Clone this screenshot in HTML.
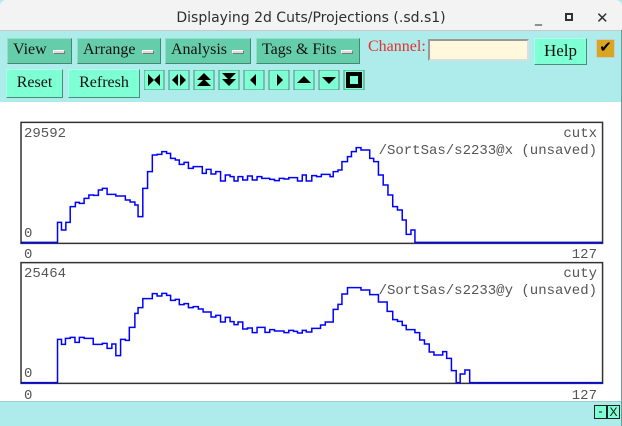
<!DOCTYPE html>
<html><head><meta charset="utf-8"><style>
*{margin:0;padding:0;box-sizing:border-box}
body{width:622px;height:426px;overflow:hidden;background:#aeeceb;position:relative;font-family:"Liberation Serif",serif}
.a{position:absolute}
.title{left:0;top:0;width:622px;height:31px;background:#f3f3f3;border-bottom:1px solid #c8c8c8;border-radius:6px 6px 0 0;font-family:"DejaVu Sans","Liberation Sans",sans-serif;font-size:14px;color:#2e2e2e;text-align:center;line-height:36px}
.menu{top:38px;height:26px;background:#66cdaa;border:1px solid #4c9c80;border-color:#8fe0c4 #3f8a70 #3f8a70 #8fe0c4;font-size:16px;color:#111;padding-left:5px;line-height:22px}
.menu i{position:absolute;right:6px;top:11px;width:12px;height:4px;background:#ddd;border:1px solid #888;border-color:#fff #777 #777 #fff}
.btn{background:#7fffd4;border:1px solid #5aaa8e;border-color:#aaffe8 #46907a #46907a #aaffe8;font-size:16px;color:#111;text-align:center}
.mono{font-family:"Liberation Mono",monospace;font-size:14px;color:#555}
</style></head><body>
<div class="a title">Displaying 2d Cuts/Projections (.sd.s1)
<span class="a" style="left:535px;top:0;font-size:14px">_</span>
<span class="a" style="left:565px;top:13px;width:8px;height:8px;border:2px solid #333"></span>
<span class="a" style="left:596px;top:0;font-size:15px">✕</span>
</div>
<div class="a menu" style="left:7px;width:65px">View<i></i></div>
<div class="a menu" style="left:77px;width:84px">Arrange<i></i></div>
<div class="a menu" style="left:165px;width:86px">Analysis<i></i></div>
<div class="a menu" style="left:256px;width:104px">Tags &amp; Fits<i></i></div>
<div class="a" style="left:368px;top:38px;font-size:16px;color:#e53030">Channel:</div>
<div class="a" style="left:428px;top:39px;width:101px;height:22px;background:#fff8dc;border:2px solid #bbb;border-color:#999 #ddd #ddd #999"></div>
<div class="a btn" style="left:534px;top:38px;width:53px;height:27px;line-height:24px;font-size:17px">Help</div>
<div class="a" style="left:596px;top:39px;width:19px;height:19px;background:#daa520;border:1px solid #ccc;font-size:15px;line-height:17px;text-align:center">✔</div>
<div class="a btn" style="left:6px;top:69px;width:57px;height:29px;line-height:25px">Reset</div>
<div class="a btn" style="left:68px;top:69px;width:72px;height:29px;line-height:25px">Refresh</div>
<svg class="a" style="left:144px;top:70px" width="230" height="20">
<g fill="#000">
<rect x="0" width="20" height="20" fill="#7fffd4" stroke="#46907a"/><path d="M4 4 L10 10 L4 16Z M16 4 L10 10 L16 16Z"/>
<g transform="translate(25,0)"><rect width="20" height="20" fill="#7fffd4" stroke="#46907a"/><path d="M9 4 L3 10 L9 16Z M11 4 L17 10 L11 16Z"/></g>
<g transform="translate(50,0)"><rect width="20" height="20" fill="#7fffd4" stroke="#46907a"/><path d="M10 3 L17 10 L3 10Z M10 9 L17 16 L3 16Z"/></g>
<g transform="translate(75,0)"><rect width="20" height="20" fill="#7fffd4" stroke="#46907a"/><path d="M3 3 H17 L10 10Z M3 9 H17 L10 16Z"/></g>
<g transform="translate(100,0)"><rect width="20" height="20" fill="#7fffd4" stroke="#46907a"/><path d="M12 4 L6 10 L12 16Z"/></g>
<g transform="translate(125,0)"><rect width="20" height="20" fill="#7fffd4" stroke="#46907a"/><path d="M8 4 L14 10 L8 16Z"/></g>
<g transform="translate(150,0)"><rect width="20" height="20" fill="#7fffd4" stroke="#46907a"/><path d="M3 13 L10 6 L17 13Z"/></g>
<g transform="translate(175,0)"><rect width="20" height="20" fill="#7fffd4" stroke="#46907a"/><path d="M3 7 L10 14 L17 7Z"/></g>
<g transform="translate(200,0)"><rect width="20" height="20" fill="#7fffd4" stroke="#46907a"/><rect x="2" y="2" width="16" height="16"/><rect x="6" y="6" width="8" height="8" fill="#7fffd4"/></g>
</g></svg>
<div class="a" style="left:0;top:102px;width:621px;height:299px;background:#fff"></div>
<div class="a" style="left:621px;top:30px;width:1px;height:396px;background:#6a9a9a"></div>
<svg class="a" style="left:0;top:110px" width="622" height="150" viewBox="0 0 1568 450" preserveAspectRatio="none">
<rect x="53" y="37" width="1466" height="363" fill="none" stroke="#333" stroke-width="1.5" vector-effect="non-scaling-stroke"/>
<path fill="none" stroke="#0000ff" stroke-width="1.5" vector-effect="non-scaling-stroke" d="M53 397 H145 V337 H155 V360 H166 V337 H177 V290 H190 V277 H200 V280 H212 V265 H224 V255 H236 V256 H248 V240 H258 V235 H270 V253 H292 V258 H316 V270 H328 V276 H340 V285 H348 V320 H360 V235 H372 V185 H384 V135 H396 V133 H408 V125 H420 V130 H430 V145 H442 V150 H452 V163 H464 V157 H475 V175 H487 V170 H510 V190 H520 V178 H532 V192 H544 V185 H556 V213 H568 V195 H580 V200 H590 V213 H600 V200 H612 V210 H624 V198 H636 V210 H648 V200 H660 V205 H680 V208 H692 V212 H704 V205 H716 V207 H728 V203 H750 V213 H762 V195 H772 V213 H786 V197 H798 V200 H810 V193 H832 V200 H840 V185 H852 V180 H862 V155 H876 V140 H886 V125 H898 V113 H910 V120 H932 V145 H942 V155 H954 V195 H966 V225 H978 V255 H990 V290 H1002 V300 H1014 V330 H1024 V373 H1036 V360 H1046 V397 H1519"/>
</svg>
<div class="a mono" style="left:24px;top:126px">29592</div>
<div class="a mono" style="right:25px;top:126px">cutx</div>
<div class="a mono" style="right:25px;top:143px">/SortSas/s2233@x (unsaved)</div>
<div class="a mono" style="left:24px;top:226px">0</div>
<div class="a mono" style="left:24px;top:247px">0</div>
<div class="a mono" style="right:25px;top:247px">127</div>
<svg class="a" style="left:0;top:260px" width="622" height="166" viewBox="0 0 1568 498" preserveAspectRatio="none">
<rect x="53" y="8" width="1466" height="362" fill="none" stroke="#333" stroke-width="1.5" vector-effect="non-scaling-stroke"/>
<path fill="none" stroke="#0000ff" stroke-width="1.5" vector-effect="non-scaling-stroke" d="M53 368 H145 V238 H155 V253 H165 V235 H177 V232 H189 V247 H200 V232 H212 V235 H235 V253 H258 V250 H270 V265 H282 V252 H292 V287 H304 V238 H316 V241 H326 V202 H340 V160 H348 V143 H360 V116 H384 V101 H396 V108 H408 V100 H420 V106 H430 V121 H442 V118 H452 V134 H464 V131 H475 V143 H487 V140 H500 V147 H512 V156 H532 V171 H544 V166 H556 V186 H568 V172 H580 V185 H590 V194 H600 V186 H612 V207 H624 V204 H636 V218 H648 V202 H668 V217 H680 V209 H692 V213 H716 V218 H728 V211 H740 V214 H750 V219 H762 V211 H772 V216 H786 V205 H808 V195 H820 V186 H840 V148 H852 V133 H862 V102 H876 V83 H910 V90 H932 V104 H954 V126 H976 V154 H990 V179 H1002 V184 H1014 V196 H1024 V209 H1046 V218 H1058 V240 H1070 V252 H1082 V276 H1094 V285 H1116 V275 H1126 V295 H1138 V332 H1150 V368 H1160 V342 H1172 V330 H1184 V368 H1519"/>
</svg>
<div class="a mono" style="left:24px;top:266px">25464</div>
<div class="a mono" style="right:25px;top:266px">cuty</div>
<div class="a mono" style="right:25px;top:283px">/SortSas/s2233@y (unsaved)</div>
<div class="a mono" style="left:24px;top:366px">0</div>
<div class="a mono" style="left:24px;top:388px">0</div>
<div class="a mono" style="right:25px;top:388px">127</div>
<div class="a" style="left:0;top:401px;width:621px;height:1px;background:#9ccfcf"></div>
<div class="a btn" style="left:594px;top:405px;width:13px;height:14px;font-size:12px;line-height:11px;font-weight:bold;border-color:#222">-</div>
<div class="a btn" style="left:607px;top:405px;width:13px;height:14px;font-size:12px;line-height:12px;font-family:'Liberation Sans',sans-serif;border-color:#222">X</div>
</body></html>
